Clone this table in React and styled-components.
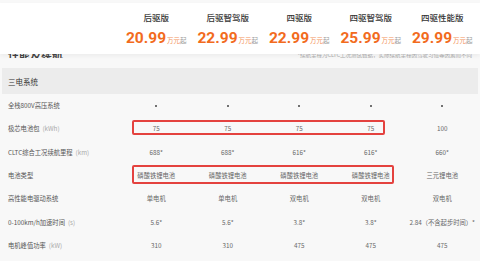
import React from "react";
import styled, { createGlobalStyle } from "styled-components";

const models = [
  { name: "后驱版", price: "20.99" },
  { name: "后驱智驾版", price: "22.99" },
  { name: "四驱版", price: "22.99" },
  { name: "四驱智驾版", price: "25.99" },
  { name: "四驱性能版", price: "29.99" },
];

const DOT = "dot";

const rows = [
  { label: "全栈800V高压系统", values: [DOT, DOT, DOT, DOT, DOT] },
  { label: "极芯电池包", unit: "(kWh)", values: ["75", "75", "75", "75", "100"], mark: { top: 3, height: 15, width: 253 } },
  { label: "CLTC综合工况续航里程", unit: "(km)", values: ["688*", "688*", "616*", "616*", "660*"] },
  { label: "电池类型", values: ["磷酸铁锂电池", "磷酸铁锂电池", "磷酸铁锂电池", "磷酸铁锂电池", "三元锂电池"], mark: { top: 1, height: 19, width: 262 } },
  { label: "高性能电驱动系统", values: ["单电机", "单电机", "双电机", "双电机", "双电机"] },
  { label: "0-100km/h加速时间", unit: "(s)", values: ["5.6*", "5.6*", "3.8*", "3.8*", "2.84（不含起步时间）*"] },
  { label: "电机峰值功率", unit: "(kW)", values: ["310", "310", "475", "475", "475"] },
];

export default function App() {
  return (
    <>
      <GlobalStyle />
      <Page>
        <Header>
          <Grid>
            <span />
            {models.map((m) => (
              <ModelCell key={m.name}>
                <ModelName>{m.name}</ModelName>
                <Price>
                  {m.price}
                  <Unit>万元</Unit>
                  <From>起</From>
                </Price>
              </ModelCell>
            ))}
          </Grid>
        </Header>

        <TitleClip>
          <Title>性能及续航</Title>
          <Note>*续航里程为CLTC工况测试数据，实际续航里程因驾驶习惯等因素而不同</Note>
        </TitleClip>

        <Section>
          <SectionBar>三电系统</SectionBar>
          {rows.map((row) => (
            <Row key={row.label}>
              <Label>
                {row.label}
                {row.unit && <LabelUnit>{row.unit}</LabelUnit>}
              </Label>
              {row.values.map((v, i) => (
                <Value key={i}>{v === DOT ? <Dot /> : v}</Value>
              ))}
              {row.mark && (
                <Highlight $top={row.mark.top} $height={row.mark.height} $width={row.mark.width} />
              )}
            </Row>
          ))}
        </Section>
      </Page>
    </>
  );
}

const GlobalStyle = createGlobalStyle`
  html, body {
    margin: 0;
    padding: 0;
    background: #f8f8f8;
    overflow: hidden;
  }
  body {
    font-family: "Noto Sans CJK SC", "Noto Sans", sans-serif;
    color: #333;
  }
`;

const Page = styled.div`
  width: 480px;
  height: 261px;
  padding-top: 3px;
  box-sizing: border-box;
  background: #f8f8f8;
`;

const Grid = styled.div`
  display: grid;
  grid-template-columns: 118.5px repeat(5, 71.5px);
  margin: 0 2px;
`;

const Header = styled.header`
  position: relative;
  z-index: 2;
  height: 51px;
  background: #fff;
  box-shadow: 0 2px 4px rgba(0, 0, 0, 0.05);
`;

const ModelCell = styled.div`
  display: flex;
  flex-direction: column;
  align-items: center;
  padding-top: 8px;
`;

const ModelName = styled.div`
  font-size: 8.5px;
  line-height: 12px;
  color: #333;
  font-weight: 500;
`;

const Price = styled.div`
  margin-top: 6px;
  display: flex;
  align-items: baseline;
  font-family: Roboto, "Noto Sans", sans-serif;
  font-weight: 700;
  font-size: 15.5px;
  line-height: 18px;
  color: #f26b1d;
  white-space: nowrap;
`;

const Unit = styled.span`
  margin-left: 1px;
  font-family: "Noto Sans CJK SC", sans-serif;
  font-weight: 400;
  font-size: 6.5px;
  color: #f3925a;
`;

const From = styled(Unit)`
  margin-left: 0;
  color: #999;
`;

const TitleClip = styled.div`
  height: 4px;
  overflow: hidden;
  display: flex;
  align-items: flex-end;
  justify-content: space-between;
  padding: 0 8px;
`;

const Title = styled.div`
  font-size: 11px;
  line-height: 11px;
  font-weight: 700;
  color: #444;
  margin-bottom: -2px;
`;

const Note = styled.div`
  font-size: 5.5px;
  line-height: 6px;
  color: #aaa;
  margin-bottom: 0;
`;

const Section = styled.section`
  margin-top: 10px;
`;

const SectionBar = styled.div`
  margin: 0 2px;
  height: 26px;
  display: flex;
  align-items: center;
  padding-left: 6px;
  background: #ececec;
  font-size: 7.5px;
  color: #333;
`;

const Row = styled(Grid)`
  position: relative;
  height: 23.33px;
  align-items: center;
`;

const Label = styled.div`
  padding-left: 6px;
  font-size: 6.3px;
  color: #555;
  white-space: nowrap;
`;

const LabelUnit = styled.span`
  margin-left: 3px;
  color: #aaa;
`;

const Value = styled.div`
  text-align: center;
  font-size: 6.3px;
  color: #666;
  white-space: nowrap;
  display: flex;
  justify-content: center;
`;

const Dot = styled.span`
  width: 2px;
  height: 2px;
  border-radius: 50%;
  background: #444;
`;

const Highlight = styled.div`
  position: absolute;
  left: 130px;
  top: ${(p) => p.$top}px;
  width: ${(p) => p.$width}px;
  height: ${(p) => p.$height}px;
  border: 2px solid #e4423f;
  border-radius: 2px;
  box-sizing: border-box;
  pointer-events: none;
`;
